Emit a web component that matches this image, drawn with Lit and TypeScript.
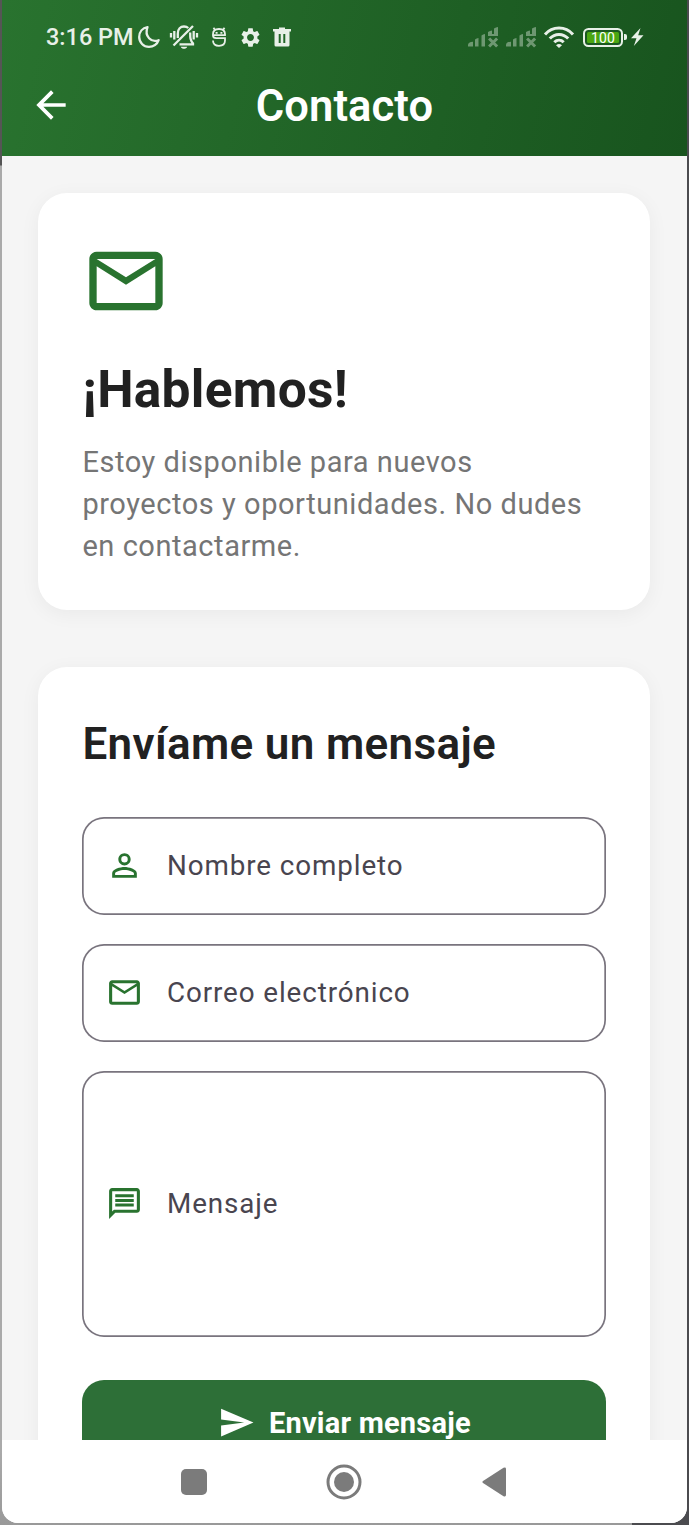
import { LitElement, html, css } from "lit";
import { customElement } from "lit/decorators.js";

const MAIL = "M22 6c0-1.100-.9-2-2-2H4c-1.100 0-2 .9-2 2v12c0 1.100.9 2 2 2h16c1.100 0 2-.9 2-2V6zm-2 0l-8 5-8-5h16zm0 12H4V8l8 5 8-5v10z";
const PERSON = "M12 5.900a2.100 2.100 0 1 1 0 4.200 2.100 2.100 0 0 1 0-4.200m0 9c2.970 0 6.100 1.460 6.100 2.100v1.100H5.900V17c0-.64 3.130-2.100 6.100-2.100M12 4C9.790 4 8 5.790 8 8s1.790 4 4 4 4-1.790 4-4-1.790-4-4-4zm0 9c-2.670 0-8 1.340-8 4v3h16v-3c0-2.660-5.330-4-8-4z";
const MESSAGE = "M4 4h16v12H5.170L4 17.170V4m0-2c-1.100 0-1.990.9-1.990 2L2 22l4-4h14c1.100 0 2-.9 2-2V4c0-1.100-.9-2-2-2H4zm2 10h12v2H6v-2zm0-3h12v2H6V9zm0-3h12v2H6V6z";
const SEND = "M2.010 21L23 12 2.010 3 2 10l15 2-15 2z";
const BACK = "M20 11H7.830l5.590-5.590L12 4l-8 8 8 8 1.410-1.410L7.830 13H20v-2z";
const GEAR = "M19.140 12.940c.04-.3.06-.61.06-.94 0-.32-.02-.64-.07-.94l2.030-1.580c.18-.14.23-.41.12-.61l-1.920-3.320c-.12-.22-.37-.29-.59-.22l-2.390.96c-.5-.38-1.030-.7-1.620-.94l-.36-2.540c-.04-.24-.24-.41-.48-.41h-3.840c-.24 0-.43.17-.47.41l-.36 2.540c-.59.24-1.130.57-1.620.94l-2.390-.96c-.22-.08-.47 0-.59.22L2.740 8.870c-.12.21-.08.47.12.61l2.030 1.580c-.05.3-.09.63-.09.94s.02.64.07.94l-2.030 1.580c-.18.14-.23.41-.12.61l1.920 3.320c.12.22.37.29.59.22l2.390-.96c.5.38 1.030.7 1.620.94l.36 2.540c.05.24.24.41.48.41h3.840c.24 0 .44-.17.47-.41l.36-2.540c.59-.24 1.130-.56 1.620-.94l2.390.96c.22.08.47 0 .59-.22l1.920-3.320c.12-.22.07-.47-.12-.61l-2.010-1.580zM12 15.600c-1.980 0-3.600-1.620-3.600-3.600s1.620-3.600 3.600-3.600 3.600 1.620 3.600 3.600-1.620 3.600-3.600 3.600z";

const icon = (d: string, cls: string) => html`<svg class=${cls} viewBox="0 0 24 24"><path d=${d} /></svg>`;

@customElement("status-bar")
class StatusBar extends LitElement {
  static styles = css`
    :host { display: flex; align-items: center; height: 74px; padding: 0 43px 0 44px; color: #e8f0e8; }
    .time { font-size: 23.500px; font-weight: 500; line-height: 28px; width: 92px; white-space: nowrap; }
    .moon { width: 22px; margin-right: 10px; }
    .bell { width: 28px; margin-right: 13px; }
    .robot { width: 16px; margin-right: 12px; }
    .gear { width: 23px; height: 23px; margin-right: 11px; fill: currentColor; }
    .trash { width: 18px; }
    .grow { flex: 1; }
    .signal { width: 30px; margin-right: 8px; opacity: 0.4; }
    .wifi { width: 30px; margin-right: 9px; }
    .battery { display: flex; align-items: center; }
    .cell { box-sizing: border-box; width: 40px; height: 19px; border: 2px solid currentColor; border-radius: 5.500px; padding: 2px; }
    .level { height: 11px; border-radius: 1.500px; background: #4ba612; color: #fff; font-size: 14px; letter-spacing: 0.200px; line-height: 12px; text-align: center; }
    .tip { width: 3px; height: 6px; margin-left: 1px; background: currentColor; border-radius: 0 2px 2px 0; }
    .bolt { width: 13px; margin-left: 4px; }
    svg { display: block; flex: none; overflow: visible; }
  `;
  signal() {
    return html`<svg class="signal" viewBox="0 0 30 20" fill="currentColor">
      <path d="M0 19.500v-1.500q0-3 5-3.200v4.700zM7 19.500v-7q1.500-1.500 3.500-1.500v8.500zM13.500 19.500v-11q1.500-1.500 3.500-1.500v12.500zM20 9V5q2-1.500 4-1.500V7h2V1.500Q28 0 30 0v9z" />
      <path d="M21.100 11.500l8 8M29.100 11.500l-8 8" stroke="currentColor" stroke-width="3" />
    </svg>`;
  }
  render() {
    return html`
      <span class="time">3:16 PM</span>
      <svg class="moon" viewBox="0 0 22 22" fill="none" stroke="currentColor" stroke-width="2.300" stroke-linejoin="round"><path d="M9.500 1.200C4.500 2 1.200 6 1.200 11c0 5.500 4.300 9.800 9.800 9.800 4.300 0 8.300-2.500 9.600-6.600C13.500 17 6 10.500 9.500 1.200z" /></svg>
      <svg class="bell" viewBox="0 0 28 24" fill="none" stroke="currentColor" stroke-width="2.300">
        <path d="M3.500 20.500L23 1M1 8v4.500M4.300 6v8.500M27 8v4.500M23.700 6v8.500" />
        <path d="M7.800 13V8.500C7.800 4 10.500 1.500 14 1.500c1.800 0 3.200.5 4.300 1.500M20.200 7.500c0 5-.2 7 2.800 11v.8H9.500" />
        <path d="M10.800 21.700h6.400c-.8 2.700-5.600 2.700-6.400 0z" fill="currentColor" stroke="none" />
      </svg>
      <svg class="robot" viewBox="0 0 16 20" fill="none" stroke="currentColor" stroke-width="1.800">
        <path d="M2.500.8L4 3M13.500.8L12 3M14 8.200H2V7.200C2 4 3.500 2 8 2s6 2 6 5.200zM2 8.500c0 2 1.300 2.700 3.200 2.700H14v2.300c0 3.500-2.200 5.300-6 5.300s-6-1.800-6-5.300" />
        <path d="M4.600 5.800h2M9.400 5.800h2" />
      </svg>
      ${icon(GEAR, "gear")}
      <svg class="trash" viewBox="0 0 18 20"><path fill="currentColor" fill-rule="evenodd" d="M6 .5h6V2h6v2.500h-1.500V18q0 1.500-1.500 1.500H3Q1.500 19.500 1.500 18V4.500H0V2h6zM5.700 7v9h2V7zM10.300 7v9h2V7z" /></svg>
      <span class="grow"></span>
      ${this.signal()}${this.signal()}
      <svg class="wifi" viewBox="0 0 30 22" fill="none" stroke="currentColor" stroke-width="3">
        <path d="M1 8.500C8.500-.1 21.500-.1 29 8.500M5.800 12.600c5.100-5.600 13.300-5.600 18.400 0M10.300 16.300c2.700-2.700 6.700-2.700 9.400 0" />
        <path d="M12 19.200q3-2.400 6 0L15 22z" fill="currentColor" stroke="none" />
      </svg>
      <div class="battery"><div class="cell"><div class="level">100</div></div><div class="tip"></div></div>
      <svg class="bolt" viewBox="0 0 13 18" fill="currentColor"><path d="M9.500 0L0 10.300h5.500L2.800 18 12.500 7.300H7.200z" /></svg>
    `;
  }
}

@customElement("form-field")
class FormField extends LitElement {
  static properties = { label: {}, path: {} };
  label = "";
  path = "";
  static styles = css`
    :host { display: flex; align-items: center; box-sizing: border-box; height: 98px; box-shadow: inset 0 0 0 1.700px #79747e; border-radius: 22px; padding-left: 23.300px; gap: 24.300px; }
    .icon { width: 37px; height: 37px; fill: #29732f; flex: none; margin-bottom: 1px; }
    .label { font-size: 27.800px; line-height: 40px; letter-spacing: 0.900px; color: #49454f; padding-bottom: 1px; }
  `;
  render() {
    return html`${icon(this.path, "icon")}<span class="label">${this.label}</span>`;
  }
}

@customElement("app-root")
class AppRoot extends LitElement {
  static styles = css`
    :host { display: block; box-sizing: border-box; height: 1525px; padding: 0 2px 2px; font-family: Roboto, sans-serif;
      background: linear-gradient(#4b4b4f, #4b4b4f) right 0 / 57px 100% no-repeat, linear-gradient(#555 0 165px, #aaa 166px 1450px, #999 1525px); }
    .phone { display: flex; flex-direction: column; height: 1523px; overflow: hidden; background: #f5f5f5; border-radius: 0 0 16px 16px; }
    .header { flex: none; height: 156px; background: linear-gradient(102.800deg, #29732f, #18541e); color: #fff; }
    .bar { display: grid; grid-template-columns: 58px 1fr 58px; align-items: center; height: 64px; padding: 0 20px; }
    .back { width: 44px; height: 44px; fill: #fff; margin: -2px 0 0 7px; }
    .title { font-size: 43.500px; font-weight: 600; line-height: 50px; letter-spacing: 0.100px; text-align: center; padding-top: 2px; }
    .content { flex: 1; min-height: 0; overflow: hidden; padding: 37px 36.600px 0 36.400px; }
    .card { box-sizing: border-box; background: #fff; border-radius: 29px; padding: 44px; box-shadow: 0 4px 20px rgba(0, 0, 0, 0.05); }
    .intro { height: 417px; margin-bottom: 57px; }
    .mail { display: block; width: 88px; height: 88px; fill: #29732f; }
    .hello { margin: 34px 0 0; font-size: 51.500px; font-weight: 700; line-height: 62px; letter-spacing: 0.250px; color: #212121; }
    .text { margin: 20px 0 0; font-size: 29px; line-height: 42px; letter-spacing: 0.550px; color: #757575; }
    .form { height: 900px; }
    .heading { margin: 6px 0 45px; font-size: 44px; font-weight: 600; line-height: 55px; letter-spacing: 0.350px; color: #212121; }
    .fields { display: flex; flex-direction: column; gap: 29.200px; }
    .area { height: 266px; }
    .send { display: flex; justify-content: center; align-items: center; gap: 14px; box-sizing: border-box; width: 100%; height: 86px; margin-top: 43px; padding: 0 0 1px; border: 0; border-radius: 22px; background: #2d6f37; color: #fff; font: 700 29px/40px Roboto, sans-serif; letter-spacing: 0.200px; }
    .plane { width: 37px; height: 37px; fill: #fff; }
    .nav { flex: none; height: 83px; background: #fff; display: flex; justify-content: center; align-items: center; gap: 114px; padding-right: 1px; }
    .key { width: 36px; height: 36px; fill: #7b7b7b; }
  `;
  render() {
    return html`
      <div class="phone">
        <header class="header">
          <status-bar></status-bar>
          <div class="bar">${icon(BACK, "back")}<div class="title">Contacto</div></div>
        </header>
        <main class="content">
          <section class="card intro">
            ${icon(MAIL, "mail")}
            <h1 class="hello">¡Hablemos!</h1>
            <p class="text">Estoy disponible para nuevos proyectos y oportunidades. No dudes en contactarme.</p>
          </section>
          <section class="card form">
            <h2 class="heading">Envíame un mensaje</h2>
            <div class="fields">
              <form-field label="Nombre completo" .path=${PERSON}></form-field>
              <form-field label="Correo electrónico" .path=${MAIL}></form-field>
              <form-field class="area" label="Mensaje" .path=${MESSAGE}></form-field>
            </div>
            <button class="send">${icon(SEND, "plane")}<span>Enviar mensaje</span></button>
          </section>
        </main>
        <nav class="nav">
          <svg class="key" viewBox="0 0 36 36"><rect x="5" y="5" width="26" height="26" rx="5" /></svg>
          <svg class="key" viewBox="0 0 36 36"><circle cx="18" cy="18" r="16" fill="none" stroke="#7b7b7b" stroke-width="3" /><circle cx="18" cy="18" r="10" /></svg>
          <svg class="key" viewBox="0 0 36 36"><path d="M7 17L27.500 3.800Q30 3 30 5V31Q30 33 27.500 32.200L7 19Q5.500 18 7 17z" /></svg>
        </nav>
      </div>
    `;
  }
}
